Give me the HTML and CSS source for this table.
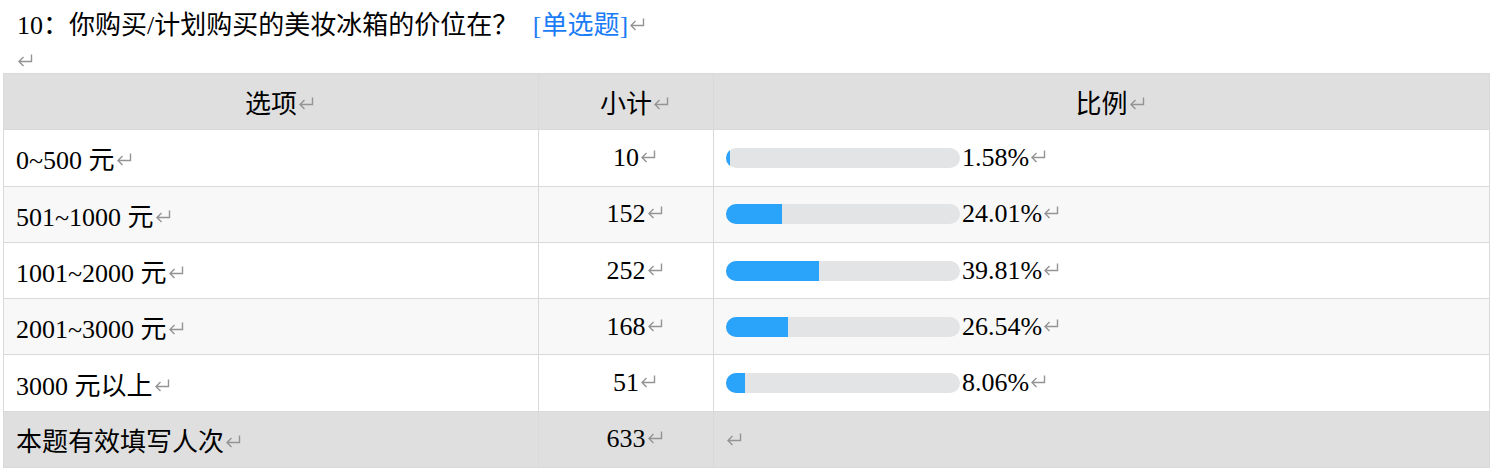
FILE: index.html
```html
<!DOCTYPE html>
<html lang="zh-CN">
<head>
<meta charset="utf-8">
<title>第10题</title>
<link rel="stylesheet" href="styles.css">
</head>
<body>
<div class="title">10：你购买/计划购买的美妆冰箱的价位在？ <span class="type">[单选题]</span><span class="pm"><svg viewBox="0 0 16 14" width="16" height="14"><path d="M14.5 1.5 V8.5 H2 M6.5 4 L2 8.5 L6.5 13" fill="none" stroke="#949494" stroke-width="1.4"/></svg></span></div>
<div class="blank"><svg viewBox="0 0 16 14" width="16" height="14"><path d="M14.5 1.5 V8.5 H2 M6.5 4 L2 8.5 L6.5 13" fill="none" stroke="#949494" stroke-width="1.4"/></svg></div>
<table class="stats">
  <thead>
    <tr>
      <th class="c-opt">选项<span class="pm"><svg viewBox="0 0 16 14" width="16" height="14"><path d="M14.5 1.5 V8.5 H2 M6.5 4 L2 8.5 L6.5 13" fill="none" stroke="#949494" stroke-width="1.4"/></svg></span></th>
      <th class="c-num">小计<span class="pm"><svg viewBox="0 0 16 14" width="16" height="14"><path d="M14.5 1.5 V8.5 H2 M6.5 4 L2 8.5 L6.5 13" fill="none" stroke="#949494" stroke-width="1.4"/></svg></span></th>
      <th class="c-pct">比例<span class="pm"><svg viewBox="0 0 16 14" width="16" height="14"><path d="M14.5 1.5 V8.5 H2 M6.5 4 L2 8.5 L6.5 13" fill="none" stroke="#949494" stroke-width="1.4"/></svg></span></th>
    </tr>
  </thead>
  <tbody>
    <tr>
      <td class="c-opt">0~500 元<span class="pm"><svg viewBox="0 0 16 14" width="16" height="14"><path d="M14.5 1.5 V8.5 H2 M6.5 4 L2 8.5 L6.5 13" fill="none" stroke="#949494" stroke-width="1.4"/></svg></span></td>
      <td class="c-num">10<span class="pm"><svg viewBox="0 0 16 14" width="16" height="14"><path d="M14.5 1.5 V8.5 H2 M6.5 4 L2 8.5 L6.5 13" fill="none" stroke="#949494" stroke-width="1.4"/></svg></span></td>
      <td class="c-pct"><div class="pct"><div class="track"><div class="fill" style="width:1.58%"></div></div><span>1.58%</span><span class="pm"><svg viewBox="0 0 16 14" width="16" height="14"><path d="M14.5 1.5 V8.5 H2 M6.5 4 L2 8.5 L6.5 13" fill="none" stroke="#949494" stroke-width="1.4"/></svg></span></div></td>
    </tr>
    <tr>
      <td class="c-opt">501~1000 元<span class="pm"><svg viewBox="0 0 16 14" width="16" height="14"><path d="M14.5 1.5 V8.5 H2 M6.5 4 L2 8.5 L6.5 13" fill="none" stroke="#949494" stroke-width="1.4"/></svg></span></td>
      <td class="c-num">152<span class="pm"><svg viewBox="0 0 16 14" width="16" height="14"><path d="M14.5 1.5 V8.5 H2 M6.5 4 L2 8.5 L6.5 13" fill="none" stroke="#949494" stroke-width="1.4"/></svg></span></td>
      <td class="c-pct"><div class="pct"><div class="track"><div class="fill" style="width:24.01%"></div></div><span>24.01%</span><span class="pm"><svg viewBox="0 0 16 14" width="16" height="14"><path d="M14.5 1.5 V8.5 H2 M6.5 4 L2 8.5 L6.5 13" fill="none" stroke="#949494" stroke-width="1.4"/></svg></span></div></td>
    </tr>
    <tr>
      <td class="c-opt">1001~2000 元<span class="pm"><svg viewBox="0 0 16 14" width="16" height="14"><path d="M14.5 1.5 V8.5 H2 M6.5 4 L2 8.5 L6.5 13" fill="none" stroke="#949494" stroke-width="1.4"/></svg></span></td>
      <td class="c-num">252<span class="pm"><svg viewBox="0 0 16 14" width="16" height="14"><path d="M14.5 1.5 V8.5 H2 M6.5 4 L2 8.5 L6.5 13" fill="none" stroke="#949494" stroke-width="1.4"/></svg></span></td>
      <td class="c-pct"><div class="pct"><div class="track"><div class="fill" style="width:39.81%"></div></div><span>39.81%</span><span class="pm"><svg viewBox="0 0 16 14" width="16" height="14"><path d="M14.5 1.5 V8.5 H2 M6.5 4 L2 8.5 L6.5 13" fill="none" stroke="#949494" stroke-width="1.4"/></svg></span></div></td>
    </tr>
    <tr>
      <td class="c-opt">2001~3000 元<span class="pm"><svg viewBox="0 0 16 14" width="16" height="14"><path d="M14.5 1.5 V8.5 H2 M6.5 4 L2 8.5 L6.5 13" fill="none" stroke="#949494" stroke-width="1.4"/></svg></span></td>
      <td class="c-num">168<span class="pm"><svg viewBox="0 0 16 14" width="16" height="14"><path d="M14.5 1.5 V8.5 H2 M6.5 4 L2 8.5 L6.5 13" fill="none" stroke="#949494" stroke-width="1.4"/></svg></span></td>
      <td class="c-pct"><div class="pct"><div class="track"><div class="fill" style="width:26.54%"></div></div><span>26.54%</span><span class="pm"><svg viewBox="0 0 16 14" width="16" height="14"><path d="M14.5 1.5 V8.5 H2 M6.5 4 L2 8.5 L6.5 13" fill="none" stroke="#949494" stroke-width="1.4"/></svg></span></div></td>
    </tr>
    <tr>
      <td class="c-opt">3000 元以上<span class="pm"><svg viewBox="0 0 16 14" width="16" height="14"><path d="M14.5 1.5 V8.5 H2 M6.5 4 L2 8.5 L6.5 13" fill="none" stroke="#949494" stroke-width="1.4"/></svg></span></td>
      <td class="c-num">51<span class="pm"><svg viewBox="0 0 16 14" width="16" height="14"><path d="M14.5 1.5 V8.5 H2 M6.5 4 L2 8.5 L6.5 13" fill="none" stroke="#949494" stroke-width="1.4"/></svg></span></td>
      <td class="c-pct"><div class="pct"><div class="track"><div class="fill" style="width:8.06%"></div></div><span>8.06%</span><span class="pm"><svg viewBox="0 0 16 14" width="16" height="14"><path d="M14.5 1.5 V8.5 H2 M6.5 4 L2 8.5 L6.5 13" fill="none" stroke="#949494" stroke-width="1.4"/></svg></span></div></td>
    </tr>
  </tbody>
  <tfoot>
    <tr>
      <td class="c-opt">本题有效填写人次<span class="pm"><svg viewBox="0 0 16 14" width="16" height="14"><path d="M14.5 1.5 V8.5 H2 M6.5 4 L2 8.5 L6.5 13" fill="none" stroke="#949494" stroke-width="1.4"/></svg></span></td>
      <td class="c-num">633<span class="pm"><svg viewBox="0 0 16 14" width="16" height="14"><path d="M14.5 1.5 V8.5 H2 M6.5 4 L2 8.5 L6.5 13" fill="none" stroke="#949494" stroke-width="1.4"/></svg></span></td>
      <td class="c-pct"><svg class="solo" viewBox="0 0 16 14" width="16" height="14"><path d="M14.5 1.5 V8.5 H2 M6.5 4 L2 8.5 L6.5 13" fill="none" stroke="#949494" stroke-width="1.4"/></svg></td>
    </tr>
  </tfoot>
</table>
</body>
</html>
```
FILE: styles.css
```css
html, body {
  margin: 0;
  padding: 0;
  background: #ffffff;
}
body {
  font-family: "Liberation Serif", "Noto Sans CJK SC", serif;
  font-size: 26px;
  color: #000;
}
.title {
  padding: 9px 0 0 17px;
  line-height: 34px;
  height: 34px;
}
.type {
  color: #1a7cf6;
  margin-left: 8px;
}
.pm {
  display: inline-block;
  width: 0;
  white-space: nowrap;
}
.pm svg {
  vertical-align: 3px;
  margin-left: 1px;
}
.blank {
  box-sizing: border-box;
  padding: 10px 0 0 17px;
  height: 30px;
}
.blank svg {
  display: block;
}
.stats {
  margin-left: 3px;
  width: 1487px;
  border-collapse: collapse;
  table-layout: fixed;
}
.stats th, .stats td {
  border: 1px solid #d9d9d9;
  height: 55.3px;
  padding: 0 12px;
  font-weight: normal;
  vertical-align: middle;
  white-space: nowrap;
}
.stats thead th {
  background: #dfdfdf;
  text-align: center;
}
.stats tfoot td {
  background: #dfdfdf;
}
.stats tbody tr:nth-child(even) td {
  background: #f8f8f8;
}
.stats th.c-opt, .stats td.c-opt {
  width: 510px;
}
.stats td.c-opt {
  text-align: left;
}
.stats th.c-num, .stats td.c-num {
  width: 150px;
  text-align: center;
}
.pct {
  display: flex;
  align-items: center;
}
.track {
  width: 234px;
  height: 20px;
  border-radius: 10px;
  background: #e3e4e6;
  overflow: hidden;
  flex: none;
  margin-right: 2px;
}
.fill {
  height: 100%;
  background: #2aa3fa;
}
.pct .pm svg {
  vertical-align: 3px;
  margin-top: -4px;
}
.solo {
  display: block;
}
```
